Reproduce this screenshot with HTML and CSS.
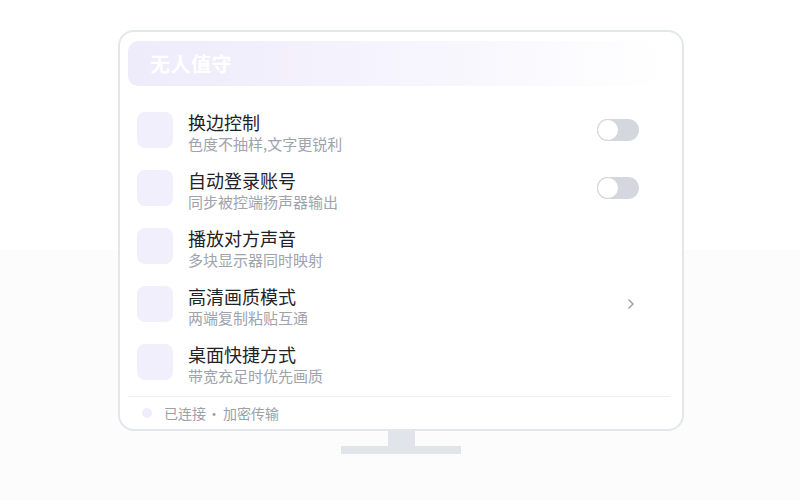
FILE: index.html
```html
<!DOCTYPE html>
<html lang="zh">
<head>
<meta charset="utf-8">
<link rel="stylesheet" href="styles.css">
</head>
<body>
<div class="stage">
  <div class="monitor">
    <div class="screen">
      <div class="header"><span class="title">无人值守</span></div>
      <div class="list">
        <div class="row">
          <div class="icon"></div>
          <div class="text"><div class="name">换边控制</div><div class="desc">色度不抽样,文字更锐利</div></div>
          <div class="toggle"><span class="knob"></span></div>
        </div>
        <div class="row">
          <div class="icon"></div>
          <div class="text"><div class="name">自动登录账号</div><div class="desc">同步被控端扬声器输出</div></div>
          <div class="toggle"><span class="knob"></span></div>
        </div>
        <div class="row">
          <div class="icon"></div>
          <div class="text"><div class="name">播放对方声音</div><div class="desc">多块显示器同时映射</div></div>
        </div>
        <div class="row">
          <div class="icon"></div>
          <div class="text"><div class="name">高清画质模式</div><div class="desc">两端复制粘贴互通</div></div>
          <svg class="chev" width="8" height="12" viewBox="0 0 8 12"><path d="M2 2 L6 6 L2 10" fill="none" stroke="#9ca3af" stroke-width="1.6" stroke-linecap="round" stroke-linejoin="round"/></svg>
        </div>
        <div class="row">
          <div class="icon"></div>
          <div class="text"><div class="name">桌面快捷方式</div><div class="desc">带宽充足时优先画质</div></div>
        </div>
      </div>
      <div class="footer"><span class="dot"></span><span>已连接<span class="sep">·</span>加密传输</span></div>
    </div>
  </div>
  <div class="neck"></div>
  <div class="base"></div>
</div>
</body>
</html>
```
FILE: styles.css
```css
* { box-sizing: border-box; }
html, body { margin: 0; padding: 0; }
body {
  width: 800px;
  height: 500px;
  background: linear-gradient(#ffffff 0, #ffffff 250px, #fcfcfd 250px, #fcfcfd 100%);
  font-family: "Noto Sans CJK SC", "Noto Sans", sans-serif;
  overflow: hidden;
}
.stage {
  display: flex;
  flex-direction: column;
  align-items: center;
  padding-top: 30px;
  padding-left: 2px;
}
.monitor {
  width: 566px;
  height: 401px;
  border: 2px solid #e3e6eb;
  border-radius: 16px;
  background: #ffffff;
  padding: 9px 12px 0 8px;
}
.screen {
  display: flex;
  flex-direction: column;
}
.header {
  height: 45px;
  border-radius: 10px;
  background: linear-gradient(90deg, #eeebfb 0%, #f6f4fd 50%, #ffffff 100%);
  display: flex;
  align-items: center;
  padding-left: 22px;
}
.title {
  color: #ffffff;
  font-size: 20px;
  font-weight: 700;
  letter-spacing: 0.5px;
}
.list {
  padding-top: 15px;
  padding-bottom: 5px;
  border-bottom: 1px solid #eceef2;
}
.row {
  height: 58px;
  display: flex;
  align-items: center;
  padding-left: 9px;
  padding-right: 31px;
}
.icon {
  width: 36px;
  height: 36px;
  border-radius: 8px;
  background: #f1effc;
  flex: none;
}
.text {
  flex: 1;
  margin-left: 15px;
  padding-top: 4px;
  display: flex;
  flex-direction: column;
}
.name {
  font-size: 18px;
  line-height: 24px;
  color: #1f2226;
}
.desc {
  font-size: 15px;
  line-height: 20px;
  color: #9ea3ac;
}
.toggle {
  width: 42px;
  height: 22px;
  border-radius: 11px;
  background: #d4d7de;
  position: relative;
  flex: none;
}
.knob {
  position: absolute;
  left: 1px;
  top: 1px;
  width: 20px;
  height: 20px;
  border-radius: 50%;
  background: #ffffff;
  box-shadow: 0 0 0 1px #d4d7de;
}
.chev {
  margin-right: 4px;
  flex: none;
}
.footer {
  height: 32px;
  display: flex;
  align-items: center;
  padding-left: 14px;
  font-size: 14px;
  color: #9aa0aa;
}
.sep {
  margin: 0 2px 0 1px;
}
.dot {
  width: 10px;
  height: 10px;
  border-radius: 50%;
  background: #efedfb;
  margin-right: 12px;
}
.neck {
  width: 27px;
  height: 15px;
  background: #e1e4e9;
}
.base {
  width: 120px;
  height: 8px;
  background: #e1e4e9;
}
```
